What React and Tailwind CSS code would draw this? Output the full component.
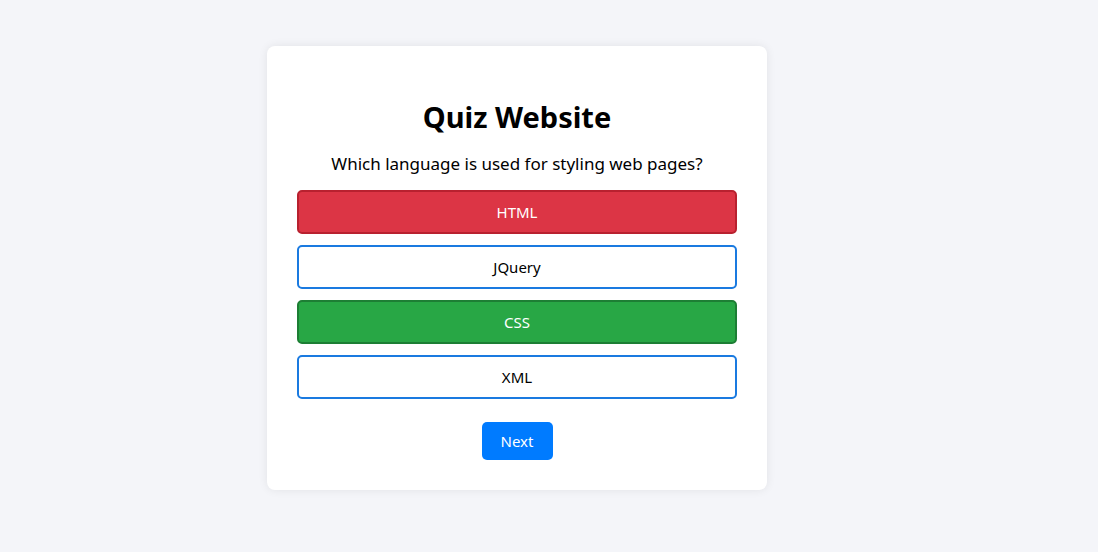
const options = [
  { label: 'HTML', state: 'wrong' },
  { label: 'JQuery', state: 'idle' },
  { label: 'CSS', state: 'right' },
  { label: 'XML', state: 'idle' },
];

const styles = {
  wrong: 'bg-[#dc3545] border-[#b8212f] text-white',
  right: 'bg-[#28a745] border-[#1d7e34] text-white',
  idle: 'bg-white border-[#1a7ae0] text-black',
};

export default function App() {
  return (
    <div className="min-h-screen bg-[#f4f5f9] pl-[267px] pt-[46px] font-['Noto_Sans',sans-serif]">
      <div className="w-[500px] rounded-[8px] bg-white px-[30px] pt-[52px] pb-[30px] shadow-[0_0_10px_rgba(0,0,0,0.08)] text-center">
        <h1 className="text-[29px] font-bold leading-[38px] text-black">Quiz Website</h1>
        <p className="mt-[15px] text-[17px] leading-[26px] text-black">Which language is used for styling web pages?</p>

        <div className="mt-[13px] flex flex-col gap-[11px]">
          {options.map((o) => (
            <button
              key={o.label}
              className={`h-[44px] w-full rounded-[5px] border-2 text-[15px] ${styles[o.state]}`}
            >
              {o.label}
            </button>
          ))}
        </div>

        <button className="mt-[23px] h-[38px] w-[71px] rounded-[5px] bg-[#007bff] text-[15px] text-white">
          Next
        </button>
      </div>
    </div>
  );
}
